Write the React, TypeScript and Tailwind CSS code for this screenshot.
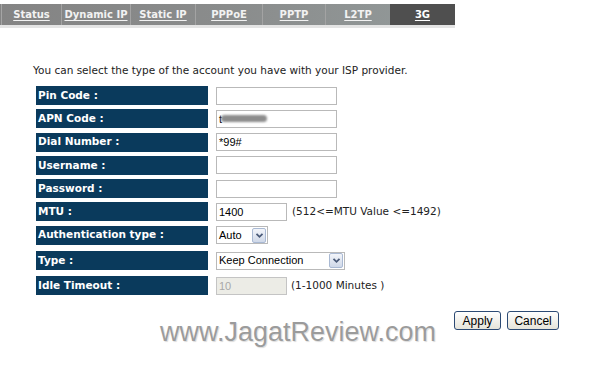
import React from "react";

const tabs = [
  { name: "Status", w: "w-[60px]" },
  { name: "Dynamic IP", w: "w-[69px]" },
  { name: "Static IP", w: "w-[65px]" },
  { name: "PPPoE", w: "w-[67px]" },
  { name: "PPTP", w: "w-[63px]" },
  { name: "L2TP", w: "w-[64px]" },
];

function Arrow() {
  return (
    <span className="flex h-[15px] w-[14px] items-center justify-center rounded-[2px] border border-[#a9b9d3] bg-gradient-to-b from-[#f3f5fa] to-[#cfd8e8]">
      <svg width="9" height="7" viewBox="0 0 9 7">
        <path d="M1.5 1.8 L4.5 4.8 L7.5 1.8" fill="none" stroke="#4a5a78" strokeWidth="1.8" />
      </svg>
    </span>
  );
}

function Label({ children }: { children: React.ReactNode }) {
  return (
    <div className="flex h-[19px] w-[172px] shrink-0 items-center bg-[#0a3a5c] pl-[2px] text-[10.5px] font-bold text-white">
      {children}
    </div>
  );
}

function TextBox({ value, w = "w-[121px]" }: { value?: React.ReactNode; w?: string }) {
  return (
    <div
      className={`flex h-[18px] ${w} items-center border border-[#b9b9b9] bg-white pl-[2px] font-['Liberation_Sans',Arial,sans-serif] text-[11px] text-black`}
    >
      {value}
    </div>
  );
}

export default function App() {
  return (
    <div className="relative h-[392px] w-[600px] overflow-hidden bg-white font-['DejaVu_Sans',Verdana,sans-serif] text-[#222]">
      {/* tab bar */}
      <div className="mt-[4px] w-[455px]">
        <div className="flex h-[21px] bg-gradient-to-r from-[#848484] via-[#8a8c8c] to-[#939a9a]">
          <div className="w-[2px] border-r border-[#a5a5a5]" />
          {tabs.map((t, i) => (
            <div
              key={t.name}
              className={`flex ${t.w} items-end justify-center pb-[3px] text-[10px] font-bold text-[#f2f2f2] underline underline-offset-2 ${
                i < tabs.length - 1 ? "border-r border-[#a3a3a3]" : ""
              }`}
            >
              {t.name}
            </div>
          ))}
          <div className="flex w-[65px] items-end justify-center bg-[#4f4f4f] pb-[3px] text-[10px] font-bold text-white underline underline-offset-2">
            3G
          </div>
        </div>
        <div className="h-[3px] bg-[#e4e4e4]" />
      </div>

      <p className="ml-[33px] mt-[36px] text-[10.5px] leading-[12px] text-[#222]">
        You can select the type of the account you have with your ISP provider.
      </p>

      <div className="ml-[36px] mt-[10px] flex flex-col gap-[4.3px]">
        <div className="flex items-center gap-[8px]">
          <Label>Pin Code :</Label>
          <TextBox />
        </div>
        <div className="flex items-center gap-[8px]">
          <Label>APN Code :</Label>
          <TextBox
            value={
              <span className="flex items-center">
                <span>t</span>
                <span className="ml-[-1px] h-[7px] w-[46px] rounded-full bg-[#8c8c8c] blur-[1px]" />
              </span>
            }
          />
        </div>
        <div className="flex items-center gap-[8px]">
          <Label>Dial Number :</Label>
          <TextBox value="*99#" />
        </div>
        <div className="flex items-center gap-[8px]">
          <Label>Username :</Label>
          <TextBox />
        </div>
        <div className="flex items-center gap-[8px]">
          <Label>Password :</Label>
          <TextBox />
        </div>
        <div className="flex items-center gap-[8px]">
          <Label>MTU :</Label>
          <TextBox value="1400" w="w-[71px]" />
          <span className="ml-[-3px] text-[10.5px] text-[#222]">(512&lt;=MTU Value &lt;=1492)</span>
        </div>
        <div className="flex items-center gap-[8px]">
          <Label>Authentication type :</Label>
          <div className="flex h-[18px] w-[52px] items-center justify-between border border-[#b9b9b9] bg-white pl-[2px] pr-[1px] font-['Liberation_Sans',Arial,sans-serif] text-[11px] text-black">
            Auto
            <Arrow />
          </div>
        </div>
        <div className="mt-[2px] flex items-center gap-[8px]">
          <Label>Type :</Label>
          <div className="flex h-[18px] w-[129px] items-center justify-between border border-[#b9b9b9] bg-white pl-[2px] pr-[1px] font-['Liberation_Sans',Arial,sans-serif] text-[11px] text-black">
            Keep Connection
            <Arrow />
          </div>
        </div>
        <div className="mt-[2px] flex items-center gap-[8px]">
          <Label>Idle Timeout :</Label>
          <div className="flex h-[18px] w-[71px] items-center border border-[#c4c4c4] bg-[#ecece6] pl-[2px] font-['Liberation_Sans',Arial,sans-serif] text-[11px] text-[#a8a8a8]">
            10
          </div>
          <span className="ml-[-4px] text-[10.5px] text-[#222]">(1-1000 Minutes )</span>
        </div>
      </div>

      <div className="mt-[16px] flex items-start pl-[160px]">
        <div className="mt-[6px] font-['Liberation_Sans',Arial,sans-serif] text-[27px] leading-[30px] text-[#9b9b9b] [text-shadow:0_0_1px_#ffffff,1px_1px_1px_#d8d8d8]">
          www.JagatReview.com
        </div>
        <div className="ml-[18px] flex gap-[6px] font-['Liberation_Sans',Arial,sans-serif] text-[12px] text-black">
          <button className="h-[19px] w-[47px] rounded-[3px] border border-[#2c4a74] bg-gradient-to-b from-white to-[#e6e4da] leading-none">
            Apply
          </button>
          <button className="h-[19px] w-[52px] rounded-[3px] border border-[#2c4a74] bg-gradient-to-b from-white to-[#e6e4da] leading-none">
            Cancel
          </button>
        </div>
      </div>
    </div>
  );
}
